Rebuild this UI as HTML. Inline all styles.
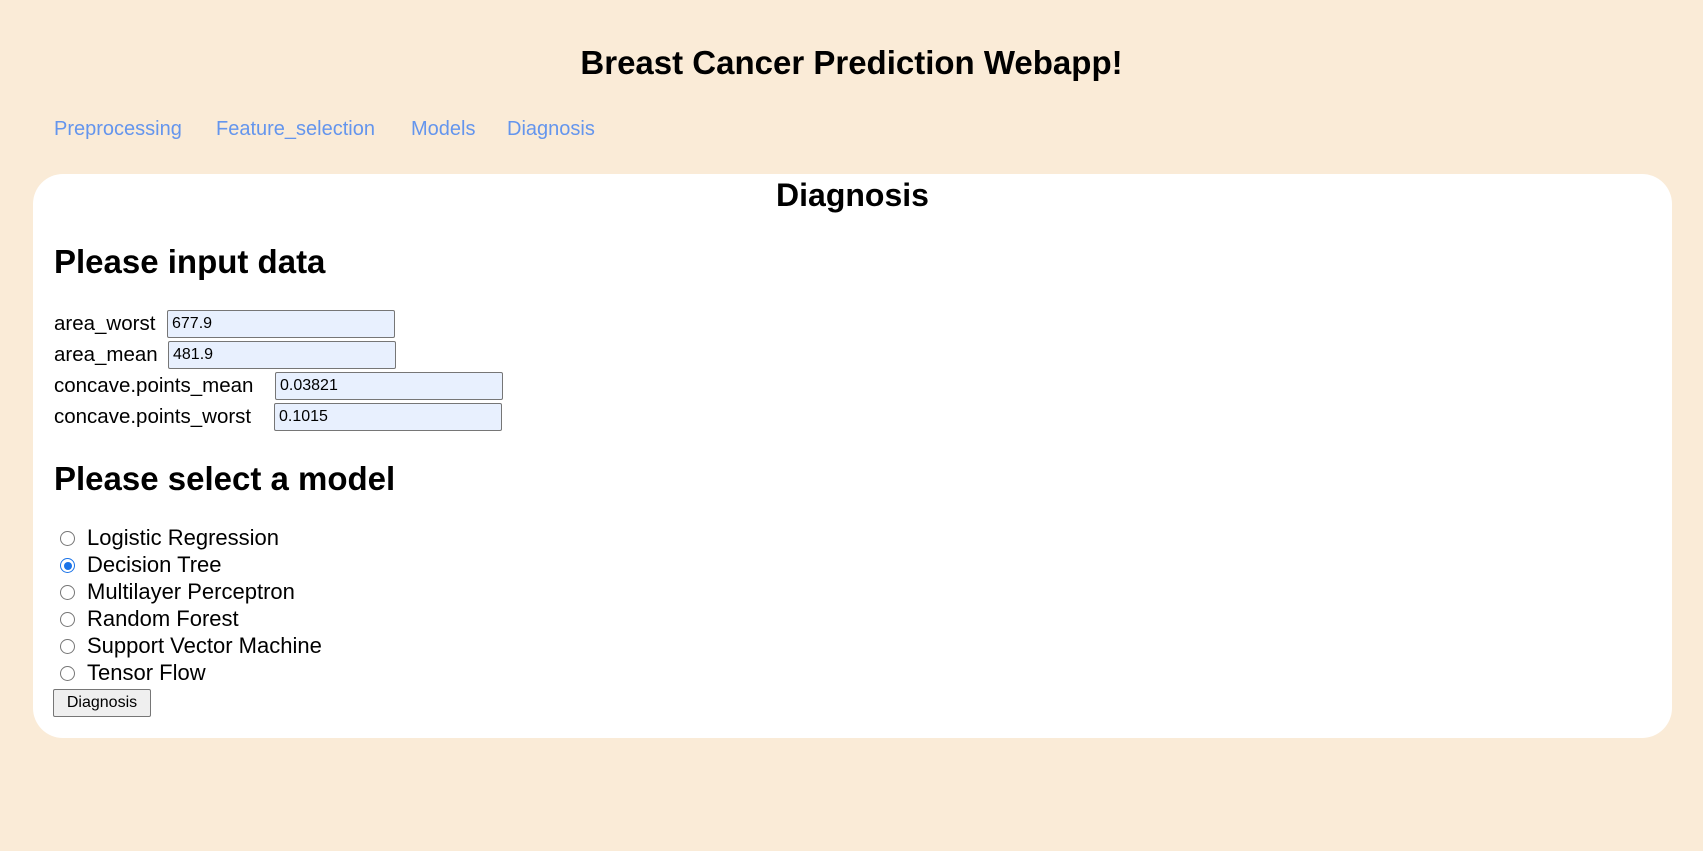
<!DOCTYPE html>
<html><head><meta charset="utf-8">
<style>
html,body{margin:0;padding:0;}
body{width:1703px;height:851px;background:#faebd7;font-family:"Liberation Sans",sans-serif;position:relative;overflow:hidden;color:#000;}
.a{position:absolute;white-space:nowrap;}
h1{position:absolute;left:0;width:1703px;text-align:center;top:44px;margin:0;font-size:33px;font-weight:bold;line-height:38px;}
.nav{top:116px;font-size:20px;color:#6495ed;line-height:26px;}
.card{position:absolute;left:33px;top:174px;width:1639px;height:564px;background:#fff;border-radius:30px;}
h2{position:absolute;left:0;width:100%;text-align:center;top:1px;margin:0;font-size:32px;line-height:40px;}
.h3{font-size:33px;font-weight:bold;line-height:40px;}
.lbl{font-size:20.5px;line-height:28px;}
.inp{position:absolute;width:228px;background:#e8f0fe;border:1px solid #767676;border-radius:2px;font-size:16px;line-height:26px;padding-left:4px;box-sizing:border-box;height:28px;}
.r{font-size:22px;line-height:27px;}
.rad{position:absolute;width:15px;height:15px;border:1px solid #767676;border-radius:50%;box-sizing:border-box;background:#fff;}
.on{border:1.5px solid #1a73e8;}
.on::after{content:"";position:absolute;left:2.5px;top:2.5px;width:8px;height:8px;border-radius:50%;background:#1a73e8;}
.btn{position:absolute;left:20px;top:515px;width:98px;height:28px;border:1px solid #767676;border-radius:2px;background:#efefef;font-size:16px;line-height:26px;text-align:center;box-sizing:border-box;}
</style></head><body>
<h1>Breast Cancer Prediction Webapp!</h1>
<div class="a nav" style="left:54px">Preprocessing</div>
<div class="a nav" style="left:216px">Feature_selection</div>
<div class="a nav" style="left:411px">Models</div>
<div class="a nav" style="left:507px">Diagnosis</div>
<div class="card">
<h2>Diagnosis</h2>
<div class="a h3" style="left:21px;top:68px">Please input data</div>
<div class="a lbl" style="left:21px;top:136px">area_worst</div>
<div class="inp" style="left:134px;top:136px">677.9</div>
<div class="a lbl" style="left:21px;top:167px">area_mean</div>
<div class="inp" style="left:135px;top:167px">481.9</div>
<div class="a lbl" style="left:21px;top:198px">concave.points_mean</div>
<div class="inp" style="left:242px;top:198px">0.03821</div>
<div class="a lbl" style="left:21px;top:229px">concave.points_worst</div>
<div class="inp" style="left:241px;top:229px">0.1015</div>
<div class="a h3" style="left:21px;top:285px">Please select a model</div>
<div class="rad" style="left:27px;top:357px"></div><div class="a r" style="left:54px;top:350px">Logistic Regression</div>
<div class="rad on" style="left:27px;top:384px"></div><div class="a r" style="left:54px;top:377px">Decision Tree</div>
<div class="rad" style="left:27px;top:411px"></div><div class="a r" style="left:54px;top:404px">Multilayer Perceptron</div>
<div class="rad" style="left:27px;top:438px"></div><div class="a r" style="left:54px;top:431px">Random Forest</div>
<div class="rad" style="left:27px;top:465px"></div><div class="a r" style="left:54px;top:458px">Support Vector Machine</div>
<div class="rad" style="left:27px;top:492px"></div><div class="a r" style="left:54px;top:485px">Tensor Flow</div>
<div class="btn">Diagnosis</div>
</div>
</body></html>
